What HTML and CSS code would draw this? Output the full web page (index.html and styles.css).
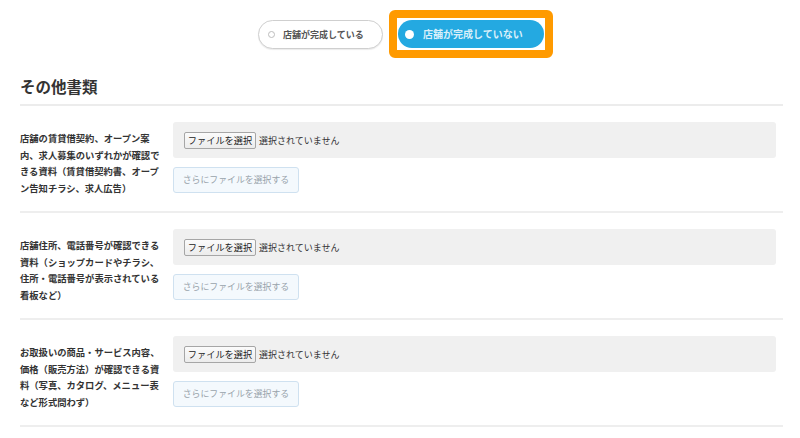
FILE: index.html
```html
<!DOCTYPE html>
<html lang="ja">
<head>
  <meta charset="UTF-8">
  <meta name="viewport" content="width=device-width, initial-scale=1.0">
  <title>その他書類</title>
  <link rel="stylesheet" href="styles.css">
</head>
<body>
  <div class="page">
    <div class="status">
      <label class="pill">
        <span class="dot"></span>
        <span class="pill-text">店舗が完成している</span>
      </label>
      <div class="mark">
        <label class="pill pill-on">
          <span class="dot"></span>
          <span class="pill-text">店舗が完成していない</span>
        </label>
      </div>
    </div>

    <h2 class="section-title">その他書類</h2>

    <div class="doc-row">
      <div class="doc-label">店舗の賃貸借契約、オープン案内、求人募集のいずれかが確認できる資料（賃貸借契約書、オープン告知チラシ、求人広告）</div>
      <div class="doc-body">
        <div class="file-box">
          <span class="file-btn">ファイルを選択</span>
          <span class="file-none">選択されていません</span>
        </div>
        <span class="add-btn">さらにファイルを選択する</span>
      </div>
    </div>

    <div class="doc-row">
      <div class="doc-label">店舗住所、電話番号が確認できる資料（ショップカードやチラシ、住所・電話番号が表示されている看板など）</div>
      <div class="doc-body">
        <div class="file-box">
          <span class="file-btn">ファイルを選択</span>
          <span class="file-none">選択されていません</span>
        </div>
        <span class="add-btn">さらにファイルを選択する</span>
      </div>
    </div>

    <div class="doc-row">
      <div class="doc-label">お取扱いの商品・サービス内容、価格（販売方法）が確認できる資料（写真、カタログ、メニュー表など形式問わず）</div>
      <div class="doc-body">
        <div class="file-box">
          <span class="file-btn">ファイルを選択</span>
          <span class="file-none">選択されていません</span>
        </div>
        <span class="add-btn">さらにファイルを選択する</span>
      </div>
    </div>
  </div>
</body>
</html>
```

FILE: styles.css
```css
html,body{
  margin: 0;
  padding: 0;
  background: #fff;
}
body{
  font-family: "Noto Sans CJK JP", "Noto Sans", sans-serif;
  color: #333;
}
.page{
  padding: 10px 17px 0 20px;
}

/* status toggle */
.status{
  display: flex;
  justify-content: center;
  align-items: flex-start;
  gap: 6px;
  padding-left: 8px;
}
.pill{
  display: flex;
  align-items: center;
  box-sizing: border-box;
  height: 29px;
  width: 125px;
  margin-top: 10px;
  padding-left: 9px;
  border: 1.5px solid #cfcfcf;
  border-radius: 15px;
  background: #fff;
  box-shadow: 0 1px 1px rgba(0,0,0,.08);
}
.pill .dot{
  width: 7px;
  height: 7px;
  border: 1px solid #bdbdbd;
  border-radius: 50%;
  box-sizing: border-box;
}
.pill-text{
  margin-left: 8px;
  font-size: 9px;
  font-weight: bold;
  color: #555;
  line-height: 1;
}
.mark{
  border: 8px solid #ff9a00;
  border-radius: 6px;
  padding: 2px 1px;
  background: #fff;
}
.pill-on{
  width: 146px;
  height: 28px;
  margin-top: 0;
  padding-left: 7px;
  border: none;
  background: #24a9e1;
  box-shadow: none;
}
.pill-on .dot{
  width: 9px;
  height: 9px;
  border: none;
  background: #fff;
}
.pill-on .pill-text{
  margin-left: 9px;
  font-size: 10px;
  color: #d8effa;
}

/* section */
.section-title{
  margin: 17px 0 0;
  padding-bottom: 7px;
  font-size: 15.5px;
  line-height: 22px;
  font-weight: bold;
  color: #333;
  border-bottom: 2px solid #ececec;
}
.doc-row{
  display: flex;
  align-items: flex-start;
  gap: 13px;
  padding: 16px 7px 15px 0;
  border-bottom: 2px solid #eeeeee;
}
.doc-label{
  width: 140px;
  flex: none;
  padding-top: 8px;
  font-size: 9.3px;
  line-height: 16.5px;
  font-weight: bold;
  color: #333;
}
.doc-body{
  flex: 1;
  display: flex;
  flex-direction: column;
  align-items: flex-start;
  gap: 9px;
}
.file-box{
  align-self: stretch;
  display: flex;
  align-items: center;
  height: 36px;
  padding: 0 11px;
  background: #f0f0f0;
  border-radius: 3px;
}
.file-btn{
  box-sizing: border-box;
  width: 72px;
  height: 17px;
  line-height: 15px;
  text-align: center;
  font-size: 9.2px;
  color: #222;
  background: linear-gradient(#fbfbfb, #ececec);
  border: 1px solid #a6a6a6;
  border-radius: 2px;
}
.file-none{
  margin-left: 3px;
  font-size: 9px;
  color: #333;
}
.add-btn{
  box-sizing: border-box;
  height: 26px;
  width: 126px;
  line-height: 24px;
  text-align: center;
  font-size: 8.9px;
  color: #98a3ab;
  background: #f4f9fd;
  border: 1px solid #cfe1f0;
  border-radius: 3px;
}
```
